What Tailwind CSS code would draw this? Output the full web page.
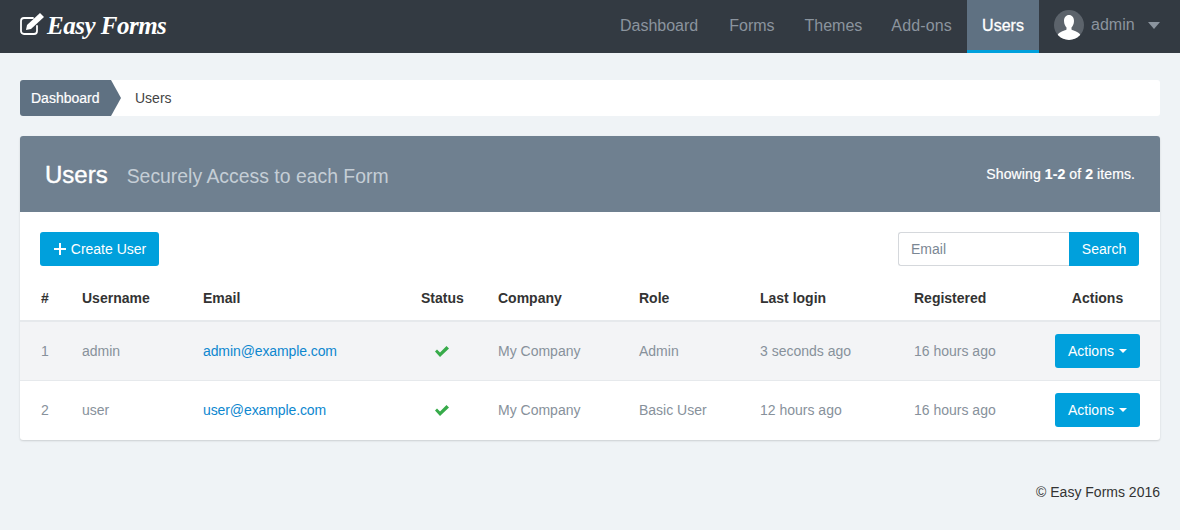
<!DOCTYPE html>
<html lang="en">
<head>
  <meta charset="UTF-8" />
  <title>Users - Easy Forms</title>
  <script src="https://cdn.jsdelivr.net/npm/@tailwindcss/browser@4"></script>
</head>
<body class="bg-[#eff3f6] h-[530px] overflow-hidden font-['Liberation_Sans',sans-serif] text-[14px] text-[#333]">

  <!-- navbar -->
  <nav class="h-[53px] bg-[#333a42] flex items-stretch justify-between pl-5">
    <a class="flex items-center gap-[3px] text-white pb-[3px]">
      <svg class="w-[24px] h-[24px]" viewBox="0 0 24 24" fill="none" stroke="#fff" stroke-width="1.800">
        <path d="M17 13v5a3 3 0 0 1-3 3H4a3 3 0 0 1-3-3V8a3 3 0 0 1 3-3h9" stroke-linecap="round"/>
        <path d="M6 17l1-5L20 0l4 4-13 12z" fill="#fff" stroke="none"/>
      </svg>
      <span class="font-['Liberation_Serif',serif] italic font-bold text-[25px] tracking-[-0.5px] leading-none">Easy Forms</span>
    </a>
    <div class="flex items-stretch text-[16px] text-[#8b949e]">
      <a class="pl-[15px] pr-4 pb-[2px] flex items-center">Dashboard</a>
      <a class="px-[15px] pb-[2px] flex items-center">Forms</a>
      <a class="pl-[15px] pr-[14px] pb-[2px] flex items-center">Themes</a>
      <a class="px-[15px] pb-[2px] flex items-center tracking-[0.15px]">Add-ons</a>
      <a class="w-[72px] pt-px justify-center flex items-center bg-[#5f7182] text-white border-b-[3px] border-[#00a0dc] [-webkit-text-stroke:0.3px_#fff]">Users</a>
      <a class="w-[141px] pl-[15px] pb-[3px] flex items-center">
        <span class="w-[30px] h-[30px] rounded-full bg-[#5c636b] overflow-hidden shrink-0">
          <svg viewBox="0 0 30 30" class="w-[30px] h-[30px]" fill="#fff">
            <path d="M15 5c3 0 5 2.500 5 6 0 3-1.500 5.500-2.500 6.500v2c1 1 7 2 9 5.500v5H3.500v-5c2-3.500 8-4.500 9-5.500v-2C11.500 16.500 10 14 10 11c0-3.500 2-6 5-6z"/>
          </svg>
        </span>
        <span class="ml-[7px] mb-px">admin</span>
        <span class="ml-[13px] w-0 h-0 border-x-[6px] border-x-transparent border-t-[7px] border-t-[#8b949e]"></span>
      </a>
    </div>
  </nav>

  <main class="px-5 pt-[27px]">
    <!-- breadcrumb -->
    <div class="h-9 bg-white rounded-[3px] flex items-center">
      <a class="relative h-9 w-[91px] bg-[#5f7182] text-white rounded-l-[3px] flex items-center pl-[11px] [-webkit-text-stroke:0.2px_#fff]">Dashboard
        <span class="absolute left-full top-0 w-0 h-0 border-y-[18px] border-y-transparent border-l-[10px] border-l-[#5f7182]"></span>
      </a>
      <span class="ml-[24px] text-[#444]">Users</span>
    </div>

    <!-- panel -->
    <section class="mt-5 bg-white rounded-[3px] shadow-[0_1px_2px_rgba(0,0,0,0.15)]">
      <header class="h-[76px] bg-[#6f8090] rounded-t-[3px] flex items-center justify-between px-[25px]">
        <div class="flex items-baseline gap-[19px] pt-[2px]">
          <h1 class="text-[24px] text-white [-webkit-text-stroke:0.4px_#fff]">Users</h1>
          <span class="text-[19.4px] text-[#c5ced6]">Securely Access to each Form</span>
        </div>
        <p class="text-white tracking-[0.1px] [-webkit-text-stroke:0.2px_#fff]">Showing <b>1-2</b> of <b>2</b> items.</p>
      </header>

      <div class="flex justify-between pt-5 pl-5 pr-[21px]">
        <a class="h-[34px] w-[119px] pl-px bg-[#00a0dc] text-white rounded-[3px] flex items-center justify-center gap-[5px]">
          <svg class="w-[12px] h-[12px]" viewBox="0 0 12 12" stroke="#fff" stroke-width="2"><path d="M6 0v12M0 6h12"/></svg>
          Create User
        </a>
        <div class="flex h-[34px]">
          <input placeholder="Email" class="w-[171px] px-3 border border-r-0 border-[#d5d8dc] rounded-l-[3px] placeholder:text-[#7b8794]" />
          <button class="w-[70px] bg-[#00a0dc] text-white rounded-r-[3px]">Search</button>
        </div>
      </div>

      <!-- table -->
      <div class="mt-[11px] grid grid-cols-[62px_121px_218px_77px_141px_121px_154px_125px_121px] items-center font-bold text-[#333] h-[45px] border-b-2 border-[#e6e9ec] pb-px">
        <span class="pl-[21px]">#</span><span>Username</span><span>Email</span><span>Status</span><span>Company</span><span>Role</span><span>Last login</span><span>Registered</span><span class="pl-4 w-[101px] text-center">Actions</span>
      </div>
      <div class="grid grid-cols-[62px_121px_218px_77px_141px_121px_154px_125px_121px] items-center h-[59px] bg-[#f3f4f6] border-b border-[#e6e9ec] text-[#87919b]">
        <span class="pl-[21px]">1</span><span>admin</span><a class="text-[#0d87cf] tracking-[-0.1px]">admin@example.com</a>
        <span class="w-[41px] flex justify-center">
          <svg class="w-[14px] h-[11px]" viewBox="0 0 14 11" fill="#37ab4a"><path d="M0 5.500l2-2 3 3L11.500 0 14 2.500 5 11z"/></svg>
        </span>
        <span>My Company</span><span>Admin</span><span>3 seconds ago</span><span>16 hours ago</span>
        <span class="pl-4"><a class="w-[85px] h-[34px] bg-[#00a0dc] text-white rounded-[3px] flex items-center justify-center gap-[5px]">Actions <i class="w-0 h-0 border-x-[4px] border-x-transparent border-t-[4px] border-t-white"></i></a></span>
      </div>
      <div class="grid grid-cols-[62px_121px_218px_77px_141px_121px_154px_125px_121px] items-center h-[59px] text-[#87919b]">
        <span class="pl-[21px]">2</span><span>user</span><a class="text-[#0d87cf] tracking-[-0.1px]">user@example.com</a>
        <span class="w-[41px] flex justify-center">
          <svg class="w-[14px] h-[11px]" viewBox="0 0 14 11" fill="#37ab4a"><path d="M0 5.500l2-2 3 3L11.500 0 14 2.500 5 11z"/></svg>
        </span>
        <span>My Company</span><span>Basic User</span><span>12 hours ago</span><span>16 hours ago</span>
        <span class="pl-4 mb-px"><a class="w-[85px] h-[34px] bg-[#00a0dc] text-white rounded-[3px] flex items-center justify-center gap-[5px]">Actions <i class="w-0 h-0 border-x-[4px] border-x-transparent border-t-[4px] border-t-white"></i></a></span>
      </div>
    </section>

    <footer class="mt-[42px] text-right text-[#333]">© Easy Forms 2016</footer>
  </main>
</body>
</html>
